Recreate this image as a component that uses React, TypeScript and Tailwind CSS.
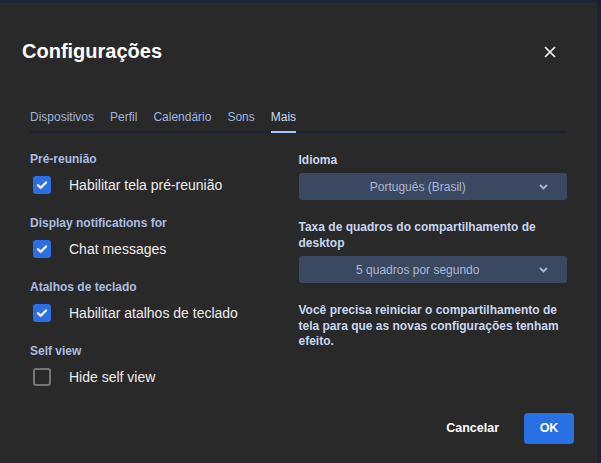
import React from "react";

const tabs = ["Dispositivos", "Perfil", "Calendário", "Sons", "Mais"];

function Check({ checked }: { checked: boolean }) {
  if (!checked) {
    return <div className="w-[18px] h-[18px] rounded-[3px] border-2 border-[#767676] shrink-0" />;
  }
  return (
    <div className="w-[18px] h-[18px] rounded-[3px] bg-[#2b71e4] flex items-center justify-center shrink-0">
      <svg width="12" height="12" viewBox="0 0 12 12" fill="none">
        <path d="M2 6.2l2.7 2.6L10 3.4" stroke="#ffffff" strokeWidth="2.2" strokeLinecap="round" strokeLinejoin="round" />
      </svg>
    </div>
  );
}

function Section({ title, label, checked, first }: { title: string; label: string; checked: boolean; first?: boolean }) {
  return (
    <div className={first ? "" : "mt-[21px]"}>
      <div className="text-[12px] leading-4 font-bold text-[#a9bde2]">{title}</div>
      <div className="mt-[9px] h-[18px] flex items-center pl-[3px] gap-[18px]">
        <Check checked={checked} />
        <span className="text-[14px] text-[#ededed]">{label}</span>
      </div>
    </div>
  );
}

function Select({ value }: { value: string }) {
  return (
    <div className="mt-[5px] h-[27px] rounded-[3px] bg-[#3b4861] flex items-center">
      <span className="flex-1 text-center text-[12px] text-[#a9b8d6]">{value}</span>
      <div className="w-[30px] flex items-center justify-center pr-[18px]">
        <svg width="9" height="6" viewBox="0 0 9 6" fill="none" className="shrink-0">
          <path d="M1 1l3.5 3.5L8 1" stroke="#a9b8d6" strokeWidth="1.8" />
        </svg>
      </div>
    </div>
  );
}

export default function App() {
  return (
    <div className="w-[601px] h-[463px] bg-[#1b2337] overflow-hidden" style={{ fontFamily: '"Liberation Sans", Arial, sans-serif' }}>
      <div className="mt-[3px] w-[597px] h-[460px] bg-[#292929] flex flex-col pt-[37px]">
        {/* Header */}
        <div className="flex items-center justify-between pl-[22px] pr-[41px] h-[23px]">
          <h1 className="text-[20px] leading-[23px] font-bold text-white">Configurações</h1>
          <svg width="12" height="12" viewBox="0 0 12 12" fill="none">
            <path d="M1 1l10 10M11 1L1 11" stroke="#ffffff" strokeWidth="1.6" />
          </svg>
        </div>

        {/* Tabs */}
        <div className="mt-[47px] mx-[30px] flex gap-[16px] border-b-2 border-[#1b2131]">
          {tabs.map((t) => (
            <div
              key={t}
              className={
                t === "Mais"
                  ? "text-[12px] leading-[14px] pb-[7px] -mb-[2px] border-b-2 border-[#a8c7fa] text-[#c5d9fb]"
                  : "text-[12px] leading-[14px] pb-[7px] text-[#9fb5de]"
              }
            >
              {t}
            </div>
          ))}
        </div>

        {/* Content */}
        <div className="mt-[18px] mx-[30px] grid grid-cols-2">
          <div>
            <Section first title="Pré-reunião" label="Habilitar tela pré-reunião" checked />
            <Section title="Display notifications for" label="Chat messages" checked />
            <Section title="Atalhos de teclado" label="Habilitar atalhos de teclado" checked />
            <Section title="Self view" label="Hide self view" checked={false} />
          </div>
          <div className="pt-px">
            <div className="text-[12px] leading-4 font-bold text-[#c8d6f0]">Idioma</div>
            <Select value="Português (Brasil)" />
            <div className="mt-[19px] text-[12px] leading-4 font-bold text-[#c8d6f0]">
              Taxa de quadros do compartilhamento de desktop
            </div>
            <Select value="5 quadros por segundo" />
            <p className="mt-[20px] text-[12px] leading-[15.5px] font-bold text-[#c8d6f0]">
              Você precisa reiniciar o compartilhamento de tela para que as novas configurações tenham efeito.
            </p>
          </div>
        </div>

        {/* Footer */}
        <div className="mt-[27px] flex items-center justify-end pr-[23px] gap-[25px]">
          <button className="text-[12.5px] font-bold text-white">Cancelar</button>
          <button className="w-[50px] h-[31px] rounded-[4px] bg-[#2870e3] text-[12.5px] font-bold text-white">OK</button>
        </div>
      </div>
    </div>
  );
}
